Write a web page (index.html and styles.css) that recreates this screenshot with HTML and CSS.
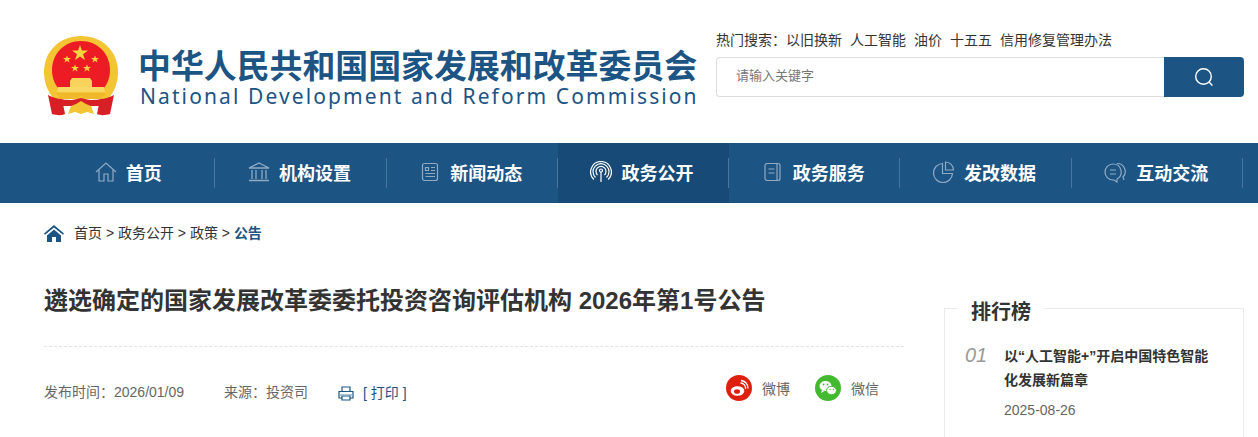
FILE: index.html
```html
<!DOCTYPE html>
<html>
<head>
  <meta charset="utf-8">
  <title>遴选确定的国家发展改革委委托投资咨询评估机构 2026年第1号公告</title>
  <link rel="stylesheet" href="styles.css">
</head>
<body>
  <div class="header">
    <div class="logo">
      <svg class="emblem" viewBox="0 0 74 80" width="74" height="80">
        <path d="M37 0C16 0 0 15 0 36c0 10 3 19 10 27l54 0c7-8 10-17 10-27C74 15 58 0 37 0z" fill="#f3c433"/>
        <path d="M37 5C20 5 8 18 8 34c0 8 3 15 7 19h44c4-4 7-11 7-19C66 18 54 5 37 5z" fill="#ed1c24"/>
        <polygon points="36,9 37.900,14.600 44,14.600 39,18.300 41,24 36,20.500 31,24 33,18.300 28,14.600 34.100,14.600" fill="#f8d640"/>
        <polygon points="23,19.500 24,22 27,22 24.600,23.700 25.500,26.500 23,24.800 20.500,26.500 21.400,23.700 19,22 22,22" fill="#f8d640"/>
        <polygon points="51,19.500 52,22 55,22 52.600,23.700 53.500,26.500 51,24.800 48.500,26.500 49.400,23.700 47,22 50,22" fill="#f8d640"/>
        <polygon points="31,28.500 32,31 35,31 32.600,32.700 33.500,35.500 31,33.800 28.500,35.500 29.400,32.700 27,31 30,31" fill="#f8d640"/>
        <polygon points="43,28.500 44,31 47,31 44.600,32.700 45.500,35.500 43,33.800 40.500,35.500 41.400,32.700 39,31 42,31" fill="#f8d640"/>
        <path d="M28 42h18l2 3v6H26v-6z" fill="#f7d35b"/>
        <path d="M14 51h46l1 5H13z" fill="#f8d966"/>
        <path d="M4 59c4 2 9 4 14 4l3 15c-4 2-9 1-13 0zM70 59c-4 2-9 4-14 4l-3 15c4 2 9 1 13 0z" fill="#d91f26"/>
        <path d="M12 57h50l-4 5c-7 2-13 2-21-2-8 4-14 4-21 2z" fill="#f0b92b"/>
        <path d="M17 63c7 2 13 1 20-1 7 2 13 3 20 1l-2 7H19z" fill="#d91f26"/>
        <path d="M24 78l3-8 5-2 5-3 5 3 5 2 3 8-7-2-6 2-6-2z" fill="#f3c433"/>
      </svg>
      <div class="logo-text">
        <div class="logo-cn">中华人民共和国国家发展和改革委员会</div>
        <div class="logo-en">National Development and Reform Commission</div>
      </div>
    </div>
    <div class="search-area">
      <div class="hot-words">
        <span>热门搜索：</span><a>以旧换新</a><a>人工智能</a><a>油价</a><a>十五五</a><a>信用修复管理办法</a>
      </div>
      <div class="search-box">
        <div class="search-input">请输入关键字</div>
        <div class="search-btn">
          <svg viewBox="0 0 20 20" width="20" height="20" fill="none" stroke="#fff" stroke-width="1.4"><circle cx="9.500" cy="9.500" r="7.800"/><path d="M15 15l3.400 3.600"/></svg>
        </div>
      </div>
    </div>
  </div>

  <div class="nav">
    <div class="nav-inner">
      <a class="nav-item">
        <svg viewBox="0 0 22 22" width="22" height="22" fill="none" stroke="#8fabc4" stroke-width="1.2"><path d="M1 11L11 2l10 9M4 9v11h5v-7h4v7h5V9"/></svg>
        首页
      </a>
      <a class="nav-item">
        <svg viewBox="0 0 22 22" width="22" height="22" fill="none" stroke="#8fabc4" stroke-width="1.3"><path d="M1 7l10-5 10 5zM4 9v9M8 9v9M14 9v9M18 9v9M1 19.500h20"/></svg>
        机构设置
      </a>
      <a class="nav-item">
        <svg viewBox="0 0 22 22" width="22" height="22" fill="none" stroke="#8fabc4" stroke-width="1.2"><rect x="3.500" y="2.500" width="15" height="17" rx="2"/><path d="M6.500 6.500h3v3h-3zM12 6.500h4M12 9.500h4M6.500 12.500h9.500M6.500 15.500h9.500"/></svg>
        新闻动态
      </a>
      <a class="nav-item active">
        <svg viewBox="0 0 22 22" width="22" height="22" fill="none" stroke="#fff" stroke-width="1.2"><path d="M11 21V11"/><circle cx="11" cy="9.500" r="1.500"/><path d="M7.500 14a5 5 0 1 1 7 0M5.500 16.500a8 8 0 1 1 11 0M3.800 18.500a10.500 10.500 0 0 1 7.200-18 10.500 10.500 0 0 1 7.200 18"/></svg>
        政务公开
      </a>
      <a class="nav-item">
        <svg viewBox="0 0 22 22" width="22" height="22" fill="none" stroke="#8fabc4" stroke-width="1.2"><path d="M5 2.500h11a2 2 0 0 1 2 2v13a2 2 0 0 1-2 2H5a2 2 0 0 1-2-2v-13a2 2 0 0 1 2-2zM6.500 8h6M6.500 12h6M15 2.500v17"/></svg>
        政务服务
      </a>
      <a class="nav-item">
        <svg viewBox="0 0 22 22" width="22" height="22" fill="none" stroke="#8fabc4" stroke-width="1.2"><path d="M9.500 2.500a9.500 9.500 0 1 0 10 10H9.500z"/><path d="M12.500 1a8 8 0 0 1 8 8h-8z"/></svg>
        发改数据
      </a>
      <a class="nav-item">
        <svg viewBox="0 0 24 22" width="24" height="22" fill="none" stroke="#8fabc4" stroke-width="1.2"><path d="M10 3a8 8 0 1 0 0 16h1l3 2v-3a8 8 0 0 0-4-15zM7 9h6M7 13h6"/><path d="M14 2.500a8 8 0 0 1 6 13.500l1 3"/></svg>
        互动交流
      </a>
    </div>
  </div>

  <div class="crumbs">
    <svg class="crumb-home" viewBox="0 0 20 17" width="20" height="17"><path d="M10 0L0 8.500l1 1.300L10 2.400l9 7.400 1-1.300zM3 10.500V17h5v-5h4v5h5v-6.500L10 4.500z" fill="#1c5484"/></svg>
    <span>首页 &gt; 政务公开 &gt; 政策 &gt; </span><b>公告</b>
  </div>

  <div class="main">
    <div class="article">
      <h1 class="title">遴选确定的国家发展改革委委托投资咨询评估机构 2026年第1号公告</h1>
      <div class="meta">
        <span class="meta-date">发布时间：2026/01/09</span>
        <span class="meta-source">来源：投资司</span>
        <a class="print">
          <svg class="print-icon" viewBox="0 0 16 15" width="16" height="15" fill="none" stroke="#1c5484" stroke-width="1.200"><path d="M4 5V1h8v4M4 12H1V5.500h14V12h-3"/><path d="M4 10h8v4H4z"/><path d="M1 9h14" stroke="#7fa0bd"/></svg>
          [ 打印 ]
        </a>
        <div class="share">
          <a class="share-item">
            <span class="share-icon weibo">
              <svg viewBox="0 0 26 26" width="26" height="26"><ellipse cx="11.500" cy="16" rx="6.800" ry="4.800" fill="#fff"/><ellipse cx="11" cy="16.500" rx="3" ry="2.300" fill="#de1f0e"/><path d="M14.500 8a5 5 0 0 1 5 6M15 5.500a7.500 7.500 0 0 1 7 8" fill="none" stroke="#fff" stroke-width="1.300"/></svg>
            </span>
            微博
          </a>
          <a class="share-item">
            <span class="share-icon wechat">
              <svg viewBox="0 0 26 26" width="26" height="26" fill="#fff"><ellipse cx="10.500" cy="11" rx="6" ry="5"/><path d="M7 15l-1 3 3.500-2z"/><ellipse cx="16.500" cy="15.500" rx="5" ry="4.200" stroke="#43b92f" stroke-width="1"/><circle cx="8.500" cy="9.500" r=".9" fill="#43b92f"/><circle cx="12.500" cy="9.500" r=".9" fill="#43b92f"/><circle cx="15" cy="14.500" r=".7" fill="#43b92f"/><circle cx="18.500" cy="14.500" r=".7" fill="#43b92f"/></svg>
            </span>
            微信
          </a>
        </div>
      </div>
    </div>
    <div class="sidebar">
      <h2 class="rank-title">排行榜</h2>
      <div class="rank-item">
        <i class="rank-num">01</i>
        <div class="rank-body">
          <a class="rank-link">以“人工智能+”开启中国特色智能化发展新篇章</a>
          <div class="rank-date">2025-08-26</div>
        </div>
      </div>
    </div>
  </div>
</body>
</html>
```

FILE: styles.css
```css
html {
  overflow: hidden;
}
body {
  margin: 0;
  font-family: "Liberation Sans", "Noto Sans CJK SC", sans-serif;
  font-size: 14px;
  color: #333;
  background-color: #fff;
}
.header {
  display: flex;
  justify-content: space-between;
  width: 1200px;
  height: 143px;
  margin-left: 44px;
}
.logo {
  display: flex;
  align-items: flex-start;
  padding-top: 36px;
}
.emblem {
  margin-right: 21px;
}
.logo-text {
  width: 560px;
  color: #1c5484;
}
.logo-cn {
  margin: 12px 0 0 -1px;
  font-size: 32.9px;
  line-height: 37px;
  font-weight: bold;
  white-space: nowrap;
}
.logo-en {
  margin-left: 1px;
  font-family: "Noto Sans", sans-serif;
  font-size: 21px;
  line-height: 23px;
  letter-spacing: 2.1px;
  white-space: nowrap;
}
.search-area {
  width: 528px;
  padding-top: 31px;
}
.hot-words {
  height: 18px;
  line-height: 18px;
  margin-bottom: 8px;
  font-size: 14px;
  white-space: nowrap;
}
.hot-words a {
  margin-right: 8px;
}
.search-box {
  display: flex;
  height: 40px;
}
.search-input {
  flex-grow: 1;
  padding-left: 19px;
  line-height: 36px;
  font-size: 13px;
  color: #777;
  border: 1px solid #ddd;
  border-right: none;
  border-radius: 4px 0 0 4px;
}
.search-btn {
  display: flex;
  align-items: center;
  justify-content: center;
  width: 80px;
  background-color: #1c5484;
  border-radius: 0 4px 4px 0;
}
.nav {
  height: 60px;
  background-color: #1c5484;
}
.nav-inner {
  display: flex;
  width: 1199px;
  height: 60px;
  margin-left: 44px;
}
.nav-item {
  position: relative;
  display: flex;
  align-items: center;
  justify-content: center;
  gap: 9px;
  flex: 1;
  padding: 0 3px 2px 0;
  font-size: 18px;
  font-weight: bold;
  color: #fff;
}
.nav-item:after {
  content: "";
  position: absolute;
  right: 0;
  top: 15px;
  height: 30px;
  width: 1px;
  background-color: #4a769d;
}
.nav-item.active {
  background-color: #174a76;
}
.crumbs {
  display: flex;
  align-items: center;
  height: 60px;
  margin-left: 44px;
  font-size: 14px;
  white-space: pre;
}
.crumbs span,
.crumbs b {
  margin-bottom: 2px;
}
.crumb-home {
  margin-right: 10px;
}
.crumbs b {
  color: #1c5484;
}
.main {
  display: flex;
  justify-content: space-between;
  width: 1200px;
  margin-left: 44px;
}
.article {
  width: 860px;
}
.title {
  margin: 0;
  padding: 22px 0 29px;
  font-size: 24px;
  line-height: 32px;
  color: #333;
  border-bottom: 1px dashed #e3e3e3;
}
.meta {
  display: flex;
  align-items: center;
  height: 88px;
  color: #666;
  font-size: 14px;
}
.meta-date {
  margin-right: 40px;
}
.meta-source {
  margin-right: 30px;
}
.print {
  display: flex;
  align-items: center;
  gap: 9px;
  padding-top: 2px;
  color: #1c5484;
}
.print-icon {
  margin-top: 2px;
}
.share {
  display: flex;
  gap: 25px;
  margin: 0 25px 6px auto;
}
.share-item {
  display: flex;
  align-items: center;
  gap: 10px;
}
.share-icon {
  width: 26px;
  height: 26px;
  border-radius: 50%;
}
.weibo {
  background-color: #de1f0e;
}
.wechat {
  background-color: #43b92f;
}
.sidebar {
  position: relative;
  width: 298px;
  height: 200px;
  margin-top: 45px;
  border: 1px solid #eaeaea;
}
.rank-title {
  position: absolute;
  left: 13px;
  top: -11px;
  margin: 0;
  padding: 0 13px;
  font-size: 20px;
  line-height: 28px;
  background-color: #fff;
}
.rank-item {
  display: flex;
  padding: 35px 20px 0;
}
.rank-num {
  width: 39px;
  margin-top: -1px;
  font-size: 20px;
  line-height: 24px;
  color: #999;
}
.rank-body {
  flex: 1;
}
.rank-link {
  display: block;
  padding-right: 8px;
  font-size: 14px;
  line-height: 24px;
  font-weight: bold;
  color: #333;
}
.rank-date {
  margin-top: 6px;
  line-height: 24px;
  color: #666;
}
```
